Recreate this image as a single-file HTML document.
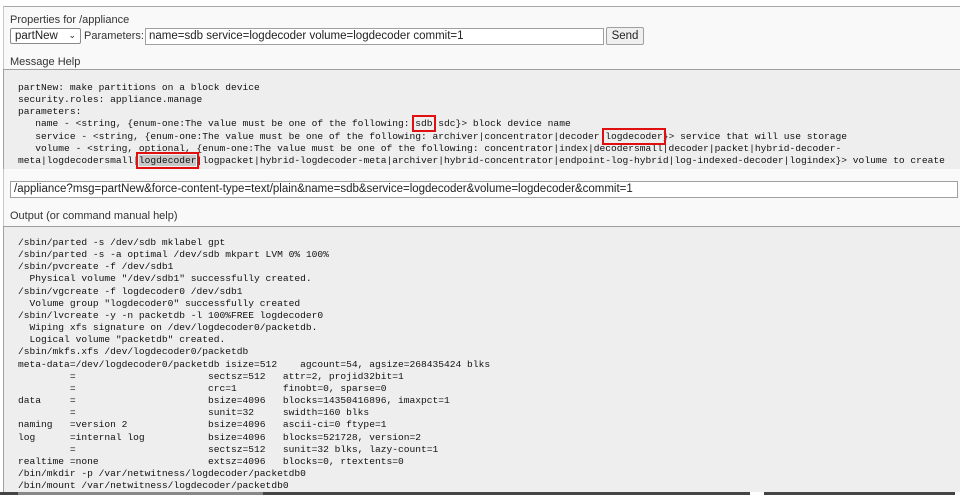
<!DOCTYPE html>
<html><head><meta charset="utf-8"><style>
*{margin:0;padding:0;box-sizing:border-box}
body{width:960px;height:495px;background:#fff;position:relative;overflow:hidden;font-family:"Liberation Sans",Arial,sans-serif;font-size:11px;color:#222}
.a{position:absolute}
.panel{left:3px;top:6px;width:957px;height:489px;background:#f9f9f9;border-top:1px solid #a8a8a8;border-left:1px solid #c8c8c8}
.lbl{font-size:11px;color:#333}
.sel{left:10px;top:28px;width:71px;height:16px;border:1px solid #8a8a8a;background:#fff;border-radius:2px;font-size:11.5px;padding:1px 4px;line-height:12px}
.inp{background:#fff;border:1px solid #a0a0a0;font-size:11.5px;padding:1px 3px;line-height:13px;white-space:nowrap;overflow:hidden}
.btn{left:606px;top:27px;width:38px;height:18px;background:#efefef;border:1px solid #a0a0a0;border-radius:2px;font-size:11.5px;text-align:center;line-height:16px}
.box{background:#eeeeee;border-top:1px solid #a0a0a0;border-left:1px solid #a0a0a0}
pre{font-family:"Liberation Mono",monospace;font-size:9.6px;line-height:12.15px;color:#111;white-space:pre}
.r{outline:2px solid #e01010;outline-offset:1px}
.g{background:#c8c8c8}
</style></head><body>
<div class="a panel"></div>
<div class="a lbl" style="left:10px;top:14px">Properties for /appliance</div>
<div class="a sel">partNew<span style="position:absolute;right:4px;top:0px;font-size:9px">&#8964;</span></div>
<div class="a lbl" style="left:84px;top:30px;font-size:11px">Parameters:</div>
<div class="a inp" style="left:145px;top:28px;width:459px;height:17px">name=sdb service=logdecoder volume=logdecoder commit=1</div>
<div class="a btn">Send</div>
<div class="a lbl" style="left:10px;top:56px">Message Help</div>
<div class="a box" style="left:3px;top:69px;width:957px;height:100px"></div>
<pre class="a" style="left:18px;top:82px">partNew: make partitions on a block device
security.roles: appliance.manage
parameters:
   name - &lt;string, {enum-one:The value must be one of the following: <span class="r">sdb</span>|sdc}&gt; block device name
   service - &lt;string, {enum-one:The value must be one of the following: archiver|concentrator|decoder|<span class="r">logdecoder</span>}&gt; service that will use storage
   volume - &lt;string, optional, {enum-one:The value must be one of the following: concentrator|index|decodersmall|decoder|packet|hybrid-decoder-
meta|logdecodersmall|<span class="r g">logdecoder</span>|logpacket|hybrid-logdecoder-meta|archiver|hybrid-concentrator|endpoint-log-hybrid|log-indexed-decoder|logindex}&gt; volume to create</pre>
<div class="a inp" style="left:10px;top:181px;width:948px;height:17px">/appliance?msg=partNew&amp;force-content-type=text/plain&amp;name=sdb&amp;service=logdecoder&amp;volume=logdecoder&amp;commit=1</div>
<div class="a lbl" style="left:10px;top:210px">Output (or command manual help)</div>
<div class="a box" style="left:3px;top:226px;width:957px;height:266px"></div>
<pre class="a" style="left:18px;top:237px">/sbin/parted -s /dev/sdb mklabel gpt
/sbin/parted -s -a optimal /dev/sdb mkpart LVM 0% 100%
/sbin/pvcreate -f /dev/sdb1
  Physical volume "/dev/sdb1" successfully created.
/sbin/vgcreate -f logdecoder0 /dev/sdb1
  Volume group "logdecoder0" successfully created
/sbin/lvcreate -y -n packetdb -l 100%FREE logdecoder0
  Wiping xfs signature on /dev/logdecoder0/packetdb.
  Logical volume "packetdb" created.
/sbin/mkfs.xfs /dev/logdecoder0/packetdb
meta-data=/dev/logdecoder0/packetdb isize=512    agcount=54, agsize=268435424 blks
         =                       sectsz=512   attr=2, projid32bit=1
         =                       crc=1        finobt=0, sparse=0
data     =                       bsize=4096   blocks=14350416896, imaxpct=1
         =                       sunit=32     swidth=160 blks
naming   =version 2              bsize=4096   ascii-ci=0 ftype=1
log      =internal log           bsize=4096   blocks=521728, version=2
         =                       sectsz=512   sunit=32 blks, lazy-count=1
realtime =none                   extsz=4096   blocks=0, rtextents=0
/bin/mkdir -p /var/netwitness/logdecoder/packetdb0
/bin/mount /var/netwitness/logdecoder/packetdb0</pre>
<div class="a" style="left:0;top:492px;width:960px;height:3px;background:#444"></div>
<div class="a" style="left:18px;top:492px;width:245px;height:3px;background:#888"></div>
<div class="a" style="left:750px;top:492px;width:14px;height:3px;background:#fff"></div>
<div class="a" style="left:955px;top:492px;width:5px;height:3px;background:#fff"></div>
</body></html>
